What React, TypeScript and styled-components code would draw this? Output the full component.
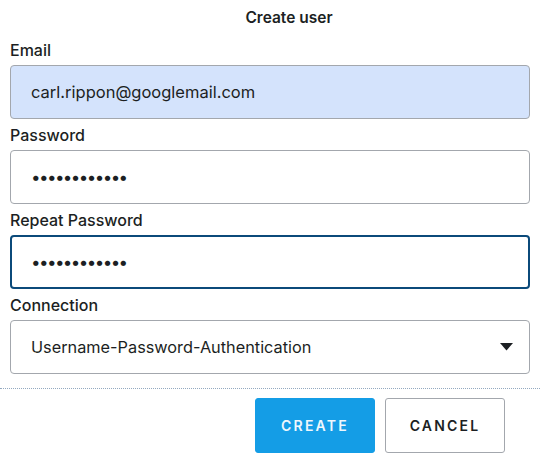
import React from "react";
import styled, { createGlobalStyle } from "styled-components";

const GlobalStyle = createGlobalStyle`
    html, body {
        margin: 0;
        padding: 0;
        background: #ffffff;
    }
    body {
        font-family: Inter, "Noto Sans", "Liberation Sans", sans-serif;
        color: #1c1f23;
    }
`;

const Dialog = styled.div`
    width: 540px;
    height: 461px;
    box-sizing: border-box;
    padding-top: 8px;
    display: flex;
    flex-direction: column;
`;

const Title = styled.h2`
    margin: 0 0 11px;
    padding-left: 38px;
    font-size: 15.5px;
    line-height: 20px;
    font-weight: 600;
    text-align: center;
`;

const Form = styled.form`
    display: flex;
    flex-direction: column;
    padding: 0 10px;
`;

const Field = styled.div`
    display: flex;
    flex-direction: column;
    margin-bottom: 5px;
`;

const Label = styled.label`
    font-size: 16px;
    line-height: 22px;
    font-weight: 500;
    margin-bottom: 4px;
`;

const Input = styled.input<{ $autofilled?: boolean; $focused?: boolean }>`
    box-sizing: border-box;
    width: 520px;
    height: 54px;
    margin: 0;
    padding: 0 20px;
    font-family: inherit;
    font-size: 16.5px;
    color: #1c1f23;
    background: ${(props) => (props.$autofilled ? "#d4e3fc" : "#ffffff")};
    border: ${(props) => (props.$focused ? "2px solid #0b4a7a" : "1px solid #a3a7ad")};
    padding-left: ${(props) => (props.$focused ? "19px" : "20px")};
    border-radius: 4px;
    outline: none;
    caret-color: #000000;
    &[type="password"] {
        font-size: 17px;
        letter-spacing: -1.6px;
    }
`;

const SelectWrap = styled.div`
    display: flex;
    align-items: center;
    box-sizing: border-box;
    width: 520px;
    height: 54px;
    border: 1px solid #a3a7ad;
    border-radius: 4px;
    padding-right: 16px;
`;

const Select = styled.select`
    flex: 1;
    height: 100%;
    appearance: none;
    border: none;
    background: transparent;
    padding: 0 20px;
    font-family: inherit;
    font-size: 16.3px;
    color: #1c1f23;
    outline: none;
`;

const Divider = styled.hr`
    margin: 9px 0 9px;
    border: none;
    border-top: 1px dotted #93a9c0;
`;

const Actions = styled.div`
    display: flex;
    justify-content: flex-end;
    gap: 10px;
    padding-right: 35px;
`;

const Button = styled.button<{ $primary?: boolean }>`
    box-sizing: border-box;
    width: 120px;
    height: 55px;
    border-radius: 3px;
    font-family: inherit;
    font-size: 14px;
    font-weight: 600;
    letter-spacing: 2.2px;
    text-transform: uppercase;
    cursor: pointer;
    background: ${(props) => (props.$primary ? "#149de6" : "#ffffff")};
    color: ${(props) => (props.$primary ? "#eef7fd" : "#1c1f23")};
    border: ${(props) => (props.$primary ? "1px solid #149de6" : "1px solid #a3a7ad")};
`;

const Caret = () => (
    <svg width="13" height="8" viewBox="0 0 13 8" aria-hidden="true">
        <path d="M0 0 H13 L6.5 7.5 Z" fill="#1c1f23" />
    </svg>
);

const App: React.FC = () => {
    const [email, setEmail] = React.useState("carl.rippon@googlemail.com");
    const [password, setPassword] = React.useState("passwordabc1");
    const [repeat, setRepeat] = React.useState("passwordabc1");
    const [connection, setConnection] = React.useState("Username-Password-Authentication");

    return (
        <>
            <GlobalStyle />
            <Dialog>
                <Title>Create user</Title>
                <Form onSubmit={(e) => e.preventDefault()}>
                    <Field>
                        <Label htmlFor="email">Email</Label>
                        <Input
                            id="email"
                            type="email"
                            $autofilled
                            value={email}
                            onChange={(e) => setEmail(e.target.value)}
                        />
                    </Field>
                    <Field>
                        <Label htmlFor="password">Password</Label>
                        <Input
                            id="password"
                            type="password"
                            value={password}
                            onChange={(e) => setPassword(e.target.value)}
                        />
                    </Field>
                    <Field>
                        <Label htmlFor="repeat">Repeat Password</Label>
                        <Input
                            id="repeat"
                            type="password"
                            $focused
                            autoFocus
                            value={repeat}
                            onChange={(e) => setRepeat(e.target.value)}
                        />
                    </Field>
                    <Field>
                        <Label htmlFor="connection">Connection</Label>
                        <SelectWrap>
                            <Select
                                id="connection"
                                value={connection}
                                onChange={(e) => setConnection(e.target.value)}
                            >
                                <option>Username-Password-Authentication</option>
                            </Select>
                            <Caret />
                        </SelectWrap>
                    </Field>
                </Form>
                <Divider />
                <Actions>
                    <Button $primary>Create</Button>
                    <Button>Cancel</Button>
                </Actions>
            </Dialog>
        </>
    );
};

export default App;
